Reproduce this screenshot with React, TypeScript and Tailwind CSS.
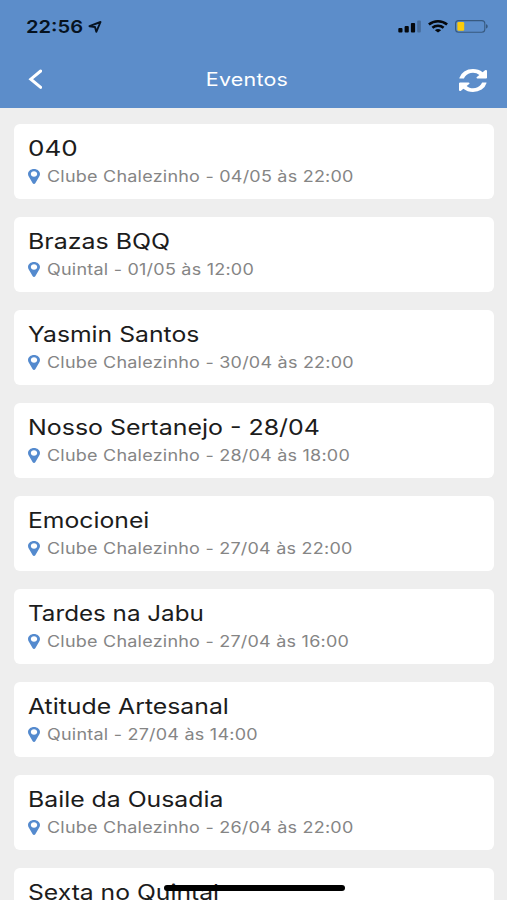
const events = [
  { title: "040", info: "Clube Chalezinho - 04/05 às 22:00", stretch: "scale-x-[1.21]" },
  { title: "Brazas BQQ", info: "Quintal - 01/05 às 12:00", stretch: "scale-x-[1.16]" },
  { title: "Yasmin Santos", info: "Clube Chalezinho - 30/04 às 22:00", stretch: "scale-x-[1.15]" },
  { title: "Nosso Sertanejo - 28/04", info: "Clube Chalezinho - 28/04 às 18:00", stretch: "scale-x-[1.16]" },
  { title: "Emocionei", info: "Clube Chalezinho - 27/04 às 22:00", stretch: "scale-x-[1.15]" },
  { title: "Tardes na Jabu", info: "Clube Chalezinho - 27/04 às 16:00", stretch: "scale-x-[1.125]" },
  { title: "Atitude Artesanal", info: "Quintal - 27/04 às 14:00", stretch: "scale-x-[1.153]" },
  { title: "Baile da Ousadia", info: "Clube Chalezinho - 26/04 às 22:00", stretch: "scale-x-[1.153]" },
  { title: "Sexta no Quintal", info: "Quintal - 26/04 às 22:00", stretch: "scale-x-[1.148]" },
];

function StatusBar() {
  return (
    <div className="flex h-[53px] items-center justify-between pl-[26px] pr-[18px] text-[#06121f]">
      <div className="flex items-center">
        <span className="w-[62px] origin-left scale-x-[1.15] whitespace-nowrap text-[17.5px] font-semibold leading-none">
          22:56
        </span>
        <svg width="14" height="12" viewBox="0 0 14 12" fill="none" stroke="currentColor" strokeWidth="1.9" strokeLinejoin="round">
          <path d="M12.500 1 1.500 5.200 7 6 8.300 10.800Z" />
        </svg>
      </div>
      <div className="flex items-center">
        <svg width="24" height="13" viewBox="0 0 24 13" className="mr-[6px]" fill="#05080c">
          <rect x="0.3" y="8" width="4.200" height="4.400" rx="1" />
          <rect x="6.6" y="6" width="4.200" height="6.400" rx="1" />
          <rect x="12.900" y="3" width="4.200" height="9.400" rx="1" />
          <rect x="19.2" y="0.5" width="3.6" height="11.9" rx="1" opacity="0.25" />
        </svg>
        <svg width="20" height="13" viewBox="0 0 20 13" className="mr-[7px]" fill="none" stroke="#05080c" strokeWidth="2.6">
          <path d="M0.900 4.600C6 0.200 14 0.200 19.100 4.600" />
          <path d="M4.400 7.800C7.500 5.100 12.500 5.100 15.600 7.800" />
          <path d="M10 12.600 6.900 10.200C8.600 8.700 11.400 8.700 13.100 10.200Z" fill="#05080c" stroke="none" />
        </svg>
        <svg width="34" height="13" viewBox="0 0 34 13">
          <rect x="0.6" y="0.6" width="29.2" height="11.6" rx="3" fill="none" stroke="#37597f" strokeWidth="1.1" />
          <rect x="2.4" y="2.1" width="6.8" height="8.6" rx="1.2" fill="#fbcb0a" />
          <path d="M31 4.300C33.300 4.800 33.300 8 31 8.500Z" fill="#37597f" />
        </svg>
      </div>
    </div>
  );
}

function NavBar() {
  return (
    <div className="grid h-[55px] grid-cols-[60px_1fr_60px] items-center text-white">
      <svg width="14" height="20" viewBox="0 0 14 20" className="ml-[28px] mb-[4px]" fill="none" stroke="currentColor" strokeWidth="3" strokeLinecap="round">
        <path d="M12.700 2 2.800 10.200 12.700 18.400" />
      </svg>
      <h1 className="mb-[1px] mr-[13px] scale-x-[1.19] text-center text-[18px] leading-none tracking-[0.2px]">Eventos</h1>
      <svg width="28" height="23" viewBox="0 128 1536 1536" preserveAspectRatio="none" className="ml-[12px]" fill="currentColor">
        <path d="M1511 1056q0 5-1 7-64 268-268 434.500t-478 166.500q-146 0-282.500-55t-243.500-157l-129 129q-19 19-45 19t-45-19-19-45v-448q0-26 19-45t45-19h448q26 0 45 19t19 45-19 45l-137 137q71 66 161 102t187 36q134 0 250-65t186-179q11-17 53-117 8-23 30-23h192q13 0 22.500 9.500t9.500 22.500zm25-800v448q0 26-19 45t-45 19h-448q-26 0-45-19t-19-45 19-45l138-138q-148-137-349-137-134 0-250 65t-186 179q-11 17-53 117-8 23-30 23h-199q-13 0-22.500-9.500t-9.500-22.500v-7q65-268 270-434.500t480-166.500q146 0 284 55.500t245 156.500l130-129q19-19 45-19t45 19 19 45z" />
      </svg>
    </div>
  );
}

function EventCard({ title, info, stretch }: { title: string; info: string; stretch: string }) {
  return (
    <li className="h-[75px] shrink-0 rounded-[6px] bg-white pl-[14px] pt-[11px]">
      <h2 className={`h-[27px] w-fit origin-left whitespace-nowrap text-[21.5px] leading-[27px] text-[#1c1c1c] ${stretch}`}>
        {title}
      </h2>
      <div className="mt-[5px] flex h-[20px] items-center">
        <svg width="12" height="15" viewBox="0 0 12 15" className="mb-[2px] mr-[7px] shrink-0" fill="#548ace" fillRule="evenodd">
          <path d="M6 0C2.700 0 0 2.300 0 5.100 0 6.200.4 7 .9 7.800L4.700 14.300C5.200 15.200 6.800 15.200 7.300 14.300L11.100 7.800C11.600 7 12 6.200 12 5.100 12 2.300 9.300 0 6 0ZM6 2.300C7.800 2.300 9.200 3.500 9.200 5S7.800 7.700 6 7.700 2.800 6.500 2.800 5 4.200 2.300 6 2.300Z" />
        </svg>
        <span className="origin-left scale-x-[1.16] whitespace-nowrap text-[15.5px] leading-[20px] tracking-[0.2px] text-[#858585]">
          {info}
        </span>
      </div>
    </li>
  );
}

export default function App() {
  return (
    <div className="relative flex h-[900px] w-[507px] flex-col overflow-hidden bg-[#eeeeee] font-['Inter',sans-serif]">
      <header className="h-[108px] shrink-0 bg-[#5c8dca]">
        <StatusBar />
        <NavBar />
      </header>
      <ul className="flex flex-col gap-[18px] pl-[14px] pr-[13px] pt-[16px]">
        {events.map((event) => (
          <EventCard key={event.title} {...event} />
        ))}
      </ul>
      <div className="absolute left-[164px] top-[885px] h-[6px] w-[181px] rounded-full bg-black" />
    </div>
  );
}
